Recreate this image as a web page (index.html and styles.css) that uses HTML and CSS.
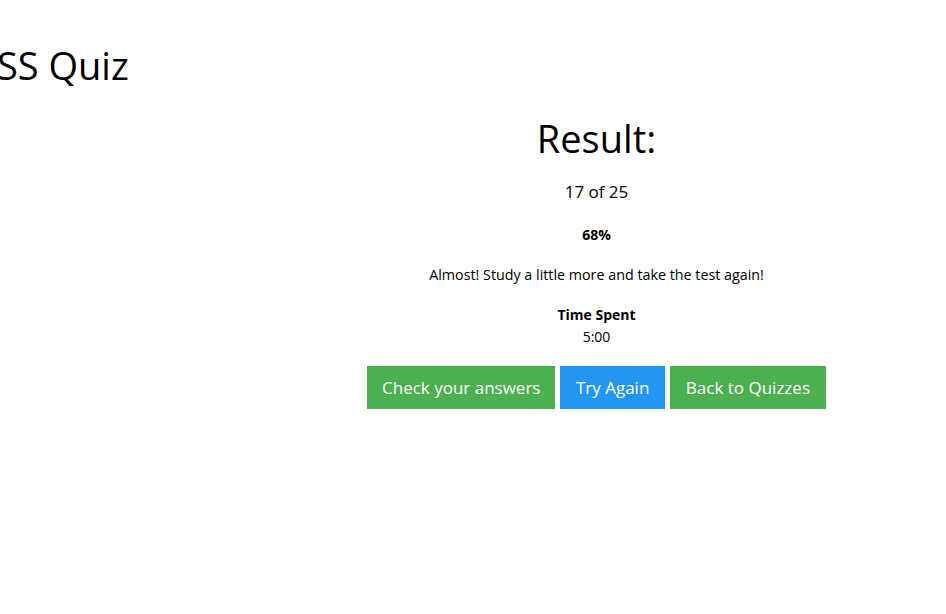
FILE: index.html
```html
<!DOCTYPE html>
<html>
<head>
<meta charset="utf-8">
<link rel="stylesheet" href="styles.css">
</head>
<body>
<h1 class="page-title">CSS Quiz</h1>
<main class="result">
  <h2 class="result-title">Result:</h2>
  <p class="score">17 of 25</p>
  <p class="percent">68%</p>
  <p class="message">Almost! Study a little more and take the test again!</p>
  <div class="time">
    <div class="time-label">Time Spent</div>
    <div class="time-value">5:00</div>
  </div>
  <div class="actions">
    <a class="btn green narrow">Check your answers</a>
    <a class="btn blue">Try Again</a>
    <a class="btn green">Back to Quizzes</a>
  </div>
</main>
</body>
</html>
```
FILE: styles.css
```css
html, body {
  margin: 0;
  padding: 0;
  background: #fff;
  color: #000;
  font-family: "Open Sans", "Noto Sans", sans-serif;
}
.page-title {
  margin: 0 0 0 -27px;
  padding-top: 40px;
  font-size: 38px;
  font-weight: 400;
  line-height: 50px;
  white-space: nowrap;
}
.result {
  margin-left: 247px;
  text-align: center;
}
.result-title {
  margin: 23px 0 0;
  font-size: 38px;
  font-weight: 400;
  line-height: 50px;
}
.score {
  margin: 17px 0 0;
  font-size: 17px;
  line-height: 24px;
}
.percent {
  margin: 21px 0 0;
  font-size: 14px;
  font-weight: 700;
  line-height: 20px;
}
.message {
  margin: 20px 0 0;
  font-size: 14.3px;
  line-height: 20px;
}
.time {
  margin-top: 19px;
  font-size: 14px;
  line-height: 22px;
}
.time-label {
  font-weight: 700;
}
.actions {
  margin-top: 18px;
  display: flex;
  justify-content: center;
  gap: 4.5px;
}
.btn {
  display: inline-block;
  padding: 0 16px;
  height: 43px;
  line-height: 43px;
  font-size: 17px;
  color: #fff;
  cursor: pointer;
}
.btn.narrow {
  padding: 0 15px;
}
.green { background: #4CAF50; }
.blue { background: #2196F3; }
```
